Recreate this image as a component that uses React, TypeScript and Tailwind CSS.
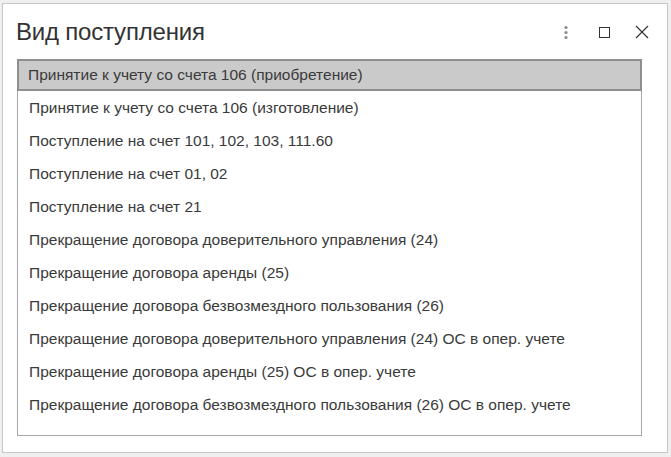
const items = [
  "Принятие к учету со счета 106 (приобретение)",
  "Принятие к учету со счета 106 (изготовление)",
  "Поступление на счет 101, 102, 103, 111.60",
  "Поступление на счет 01, 02",
  "Поступление на счет 21",
  "Прекращение договора доверительного управления (24)",
  "Прекращение договора аренды (25)",
  "Прекращение договора безвозмездного пользования (26)",
  "Прекращение договора доверительного управления (24) ОС в опер. учете",
  "Прекращение договора аренды (25) ОС в опер. учете",
  "Прекращение договора безвозмездного пользования (26) ОС в опер. учете",
];

export default function App() {
  return (
    <div
      className="w-[671px] h-[457px] bg-[#efefef] pl-[2px] pt-[3px]"
      style={{ fontFamily: '"Liberation Sans", Arial, sans-serif' }}
    >
      <div className="w-[666px] h-[450px] bg-white border border-[#c6c6c6] flex flex-col">
        <div className="h-[55px] flex items-center pl-[13px] pr-[18px] pt-[1px]">
          <h1 className="text-[24px] text-[#333] flex-1 tracking-[-0.2px]">Вид поступления</h1>
          <div className="flex items-center">
            <svg width="6" height="15" viewBox="0 0 6 15" className="mr-[30px]">
              <circle cx="3" cy="2.5" r="1.6" fill="#8a8a8a" />
              <circle cx="3" cy="7.5" r="1.6" fill="#8a8a8a" />
              <circle cx="3" cy="12.5" r="1.6" fill="#8a8a8a" />
            </svg>
            <div className="w-[11px] h-[11px] border border-[#333] mr-[25px]" />
            <svg width="14" height="14" viewBox="0 0 14 14">
              <path d="M1 1L13 13M13 1L1 13" stroke="#333" strokeWidth="1.2" />
            </svg>
          </div>
        </div>
        <div className="ml-[14px] w-[625px] h-[377px] border border-[#a6a6a6]">
          {items.map((t, i) => (
            <div
              key={t}
              className={
                i === 0
                  ? "h-[32px] flex items-center pl-[9px] border-2 border-[#8e8e8e] bg-[#cacaca] text-[15.5px] text-[#3a3a3a] -mt-[1px] -mx-[1px]"
                  : "h-[33px] flex items-center pl-[11px] text-[15.5px] text-[#3a3a3a]"
              }
            >
              {t}
            </div>
          ))}
        </div>
      </div>
    </div>
  );
}
